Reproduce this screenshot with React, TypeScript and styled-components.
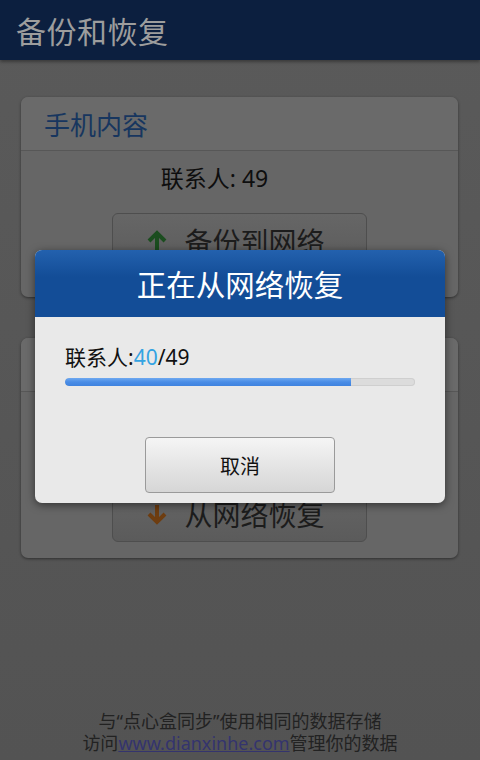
import React from 'react'
import styled, { createGlobalStyle } from 'styled-components'

const GlobalStyle = createGlobalStyle`
  html, body {
    margin: 0;
    padding: 0;
    background: #565656;
  }
  body {
    font-family: "Noto Sans", "Noto Sans CJK SC", sans-serif;
  }
`

const Screen = styled.div`
  position: relative;
  width: 480px;
  height: 760px;
  overflow: hidden;
  display: flex;
  flex-direction: column;
  background: linear-gradient(#5a5a5a, #535353);
`

const TitleBar = styled.div`
  height: 60px;
  flex: none;
  display: flex;
  align-items: center;
  padding-left: 16px;
  background: #0c1f3f;
  box-shadow: 0 2px 3px rgba(0, 0, 0, 0.35);
  color: #9d9d9d;
  font-size: 30px;
  letter-spacing: 0.5px;
`

const Content = styled.div`
  display: flex;
  flex-direction: column;
  gap: 41px;
  padding: 37px 22px 0 21px;
`

const Card = styled.div`
  display: flex;
  flex-direction: column;
  border-radius: 7px;
  background: #666666;
  box-shadow: 0 1px 3px rgba(0, 0, 0, 0.45);
  overflow: hidden;
`

const CardHeader = styled.div`
  height: 53px;
  display: flex;
  align-items: center;
  padding-left: 23px;
  background: #6a6a6a;
  border-bottom: 1px solid #575757;
  color: #17365f;
  font-size: 26px;
`

const CardBody = styled.div<{ $top: number; $bottom: number }>`
  display: flex;
  flex-direction: column;
  align-items: center;
  padding: ${({ $top }) => $top}px 0 ${({ $bottom }) => $bottom}px;
`

const Count = styled.div`
  color: #0e0e0e;
  font-size: 23px;
  line-height: 30px;
  margin-right: 50px;
`

const ActionButton = styled.div<{ $mt: number }>`
  width: 255px;
  height: 56px;
  margin-top: ${({ $mt }) => $mt}px;
  box-sizing: border-box;
  display: flex;
  align-items: center;
  justify-content: center;
  gap: 16px;
  border: 1px solid #4e4e4e;
  border-radius: 6px;
  background: linear-gradient(#666666, #5b5b5b);
  color: #1c1c1c;
  font-size: 28px;
  padding-right: 8px;
`

const Footer = styled.div`
  margin-top: auto;
  padding-bottom: 6px;
  text-align: center;
  color: #222;
  font-size: 18px;
  line-height: 22px;
`

const Link = styled.span`
  color: #34346e;
  text-decoration: underline;
`

const Dialog = styled.div`
  position: absolute;
  left: 35px;
  top: 250px;
  width: 410px;
  height: 253px;
  display: flex;
  flex-direction: column;
  border-radius: 7px;
  overflow: hidden;
  background: #e9e9e9;
  box-shadow: 0 2px 8px rgba(0, 0, 0, 0.5);
`

const DialogHeader = styled.div`
  height: 67px;
  flex: none;
  display: flex;
  align-items: center;
  justify-content: center;
  background: linear-gradient(#2361ae, #134d97 40%, #134d97);
  color: #fff;
  font-size: 29.5px;
`

const DialogBody = styled.div`
  display: flex;
  flex-direction: column;
  padding: 26px 30px 0 30px;
`

const ProgressLabel = styled.div`
  color: #111;
  font-size: 21px;
  line-height: 28px;
`

const Done = styled.span`
  color: #34a3e2;
`

const Track = styled.div`
  margin-top: 7px;
  height: 8px;
  border-radius: 4px;
  background: #dcdcdc;
  box-shadow: inset 0 0 0 1px #cfcfcf;
  overflow: hidden;
`

const Fill = styled.div`
  height: 100%;
  border-radius: 4px 0 0 4px;
  background: linear-gradient(#6ea8f0, #4a8de6 50%, #3f83df);
`

const CancelButton = styled.div`
  align-self: center;
  margin-top: 51px;
  width: 190px;
  height: 56px;
  box-sizing: border-box;
  display: flex;
  align-items: center;
  justify-content: center;
  border: 1px solid #9a9a9a;
  border-radius: 4px;
  background: linear-gradient(#f5f5f5, #e2e2e2 60%, #d6d6d6);
  color: #111;
  font-size: 20px;
`

const Arrow: React.FC<{ color: string; down?: boolean }> = ({ color, down }) => (
  <svg width="22" height="22" viewBox="0 0 22 22" style={{ transform: down ? 'rotate(180deg)' : undefined }}>
    <path d="M11 3 L11 20" stroke={color} strokeWidth="4" />
    <path d="M3 11 L11 3 L19 11" stroke={color} strokeWidth="4" fill="none" />
  </svg>
)

const done = 40
const total = 49

const App: React.FC = () => {
  return (
    <Screen>
      <GlobalStyle />
      <TitleBar>备份和恢复</TitleBar>
      <Content>
        <Card>
          <CardHeader>手机内容</CardHeader>
          <CardBody $top={12} $bottom={28}>
            <Count>联系人: 49</Count>
            <ActionButton $mt={20}>
              <Arrow color="#1b4d1f" />
              备份到网络
            </ActionButton>
          </CardBody>
        </Card>
        <Card>
          <CardHeader>网络内容</CardHeader>
          <CardBody $top={12} $bottom={16}>
            <Count>联系人: 49</Count>
            <ActionButton $mt={52}>
              <Arrow color="#6e3d10" down />
              从网络恢复
            </ActionButton>
          </CardBody>
        </Card>
      </Content>
      <Footer>
        <div>与“点心盒同步”使用相同的数据存储</div>
        <div>
          访问<Link>www.dianxinhe.com</Link>管理你的数据
        </div>
      </Footer>
      <Dialog>
        <DialogHeader>正在从网络恢复</DialogHeader>
        <DialogBody>
          <ProgressLabel>
            联系人:<Done>{done}</Done>/{total}
          </ProgressLabel>
          <Track>
            <Fill style={{ width: `${(done / total) * 100}%` }} />
          </Track>
          <CancelButton>取消</CancelButton>
        </DialogBody>
      </Dialog>
    </Screen>
  )
}

export default App
